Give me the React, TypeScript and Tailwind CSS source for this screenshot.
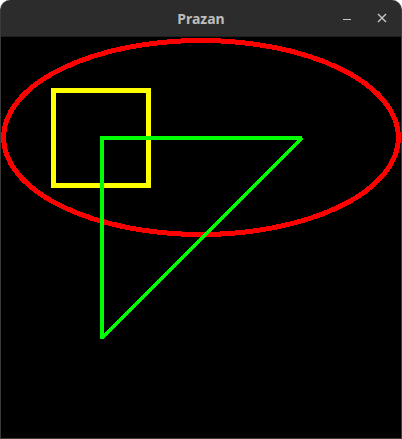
export default function App() {
  return (
    <div className="min-h-screen bg-white">
      <div className="flex h-[439px] w-[402px] flex-col overflow-hidden rounded-t-[10px] border border-t-0 border-[#3a3a3a] bg-[#2c2c2c]">
        {/* Title bar */}
        <div className="relative flex h-[37px] shrink-0 items-center justify-center border-b border-[#1f1f1f]">
          <span className="font-['Noto_Sans',sans-serif] text-[14px] font-bold text-[#bdbdbd]">
            Prazan
          </span>
          <div className="absolute right-[14px] top-0 flex h-full items-center gap-[26px]">
            <span className="mt-[3px] block h-[1.5px] w-[8px] bg-[#c8c8c8]" />
            <svg width="10" height="10" viewBox="0 0 10 10" className="text-[#c8c8c8]">
              <path d="M1 1 L9 9 M9 1 L1 9" stroke="currentColor" strokeWidth="1.4" />
            </svg>
          </div>
        </div>

        {/* Drawing canvas */}
        <div className="flex-1 bg-black">
          <svg width="400" height="401" viewBox="0 0 400 401" shapeRendering="crispEdges">
            <ellipse cx="200" cy="100.5" rx="197.5" ry="97" fill="none" stroke="#ff0000" strokeWidth="5" />
            <rect x="52.5" y="53.5" width="95" height="95" fill="none" stroke="#ffff00" strokeWidth="5" />
            <line x1="99" y1="101" x2="301" y2="101" stroke="#00ff00" strokeWidth="4" />
            <line x1="101" y1="99" x2="101" y2="302" stroke="#00ff00" strokeWidth="4" />
            <line x1="301" y1="101" x2="101" y2="301" stroke="#00ff00" strokeWidth="3" />
          </svg>
        </div>
      </div>
    </div>
  );
}
